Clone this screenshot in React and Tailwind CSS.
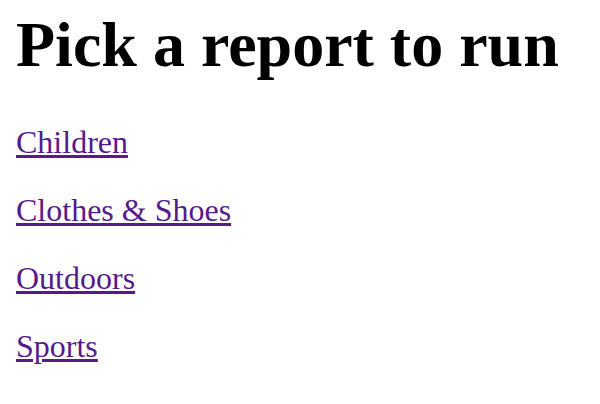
const REPORTS = ['Children', 'Clothes & Shoes', 'Outdoors', 'Sports']

export default function App() {
  return (
    <div className="min-h-[404px] bg-white px-4 pt-[8px] font-['Liberation_Serif','Times_New_Roman',serif] leading-[normal] text-black">
      <h1 className="mb-[42px] text-[64px] font-bold">Pick a report to run</h1>
      {REPORTS.map(name => (
        <p key={name} className="my-[31px] text-[32px]">
          <a href="#" className="text-[#551a8b] underline">
            {name}
          </a>
        </p>
      ))}
    </div>
  )
}
